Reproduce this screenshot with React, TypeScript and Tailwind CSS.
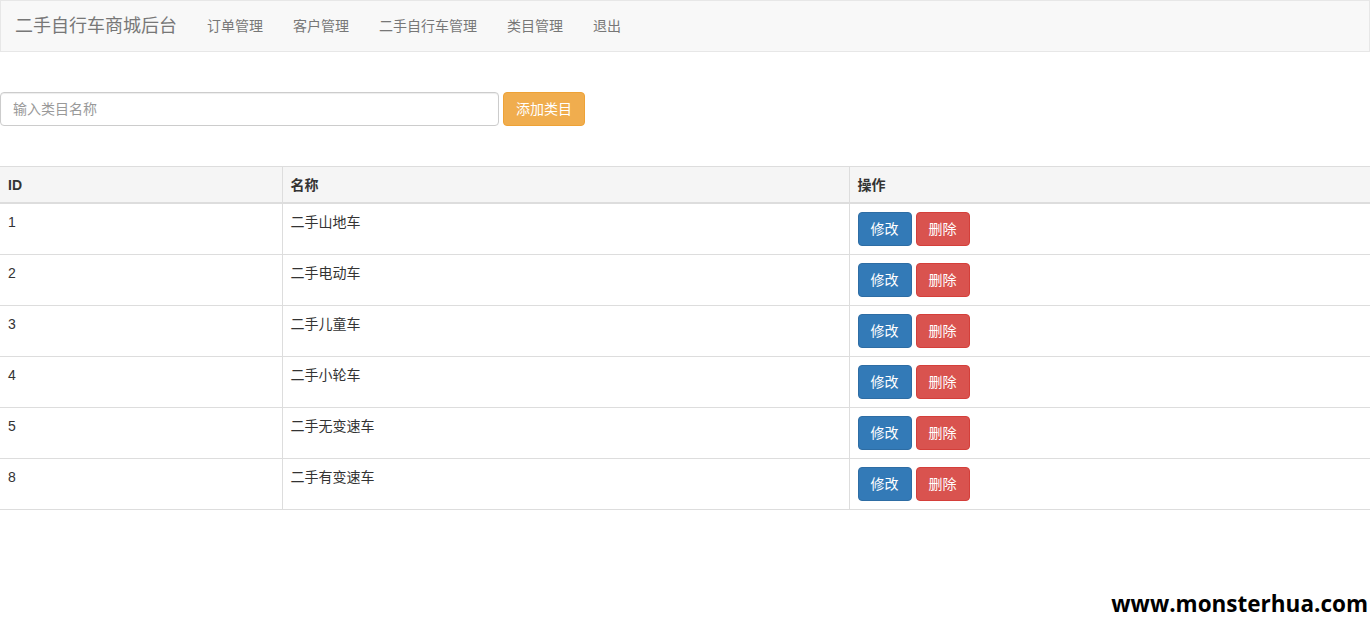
import React from 'react';

const navItems = ['订单管理', '客户管理', '二手自行车管理', '类目管理', '退出'];

const categories = [
  { id: 1, name: '二手山地车' },
  { id: 2, name: '二手电动车' },
  { id: 3, name: '二手儿童车' },
  { id: 4, name: '二手小轮车' },
  { id: 5, name: '二手无变速车' },
  { id: 8, name: '二手有变速车' },
];

export default function App() {
  return (
    <div
      className="relative min-h-[635px] bg-white text-[14px] leading-[20px] text-[#333]"
      style={{ fontFamily: '"Liberation Sans", "Noto Sans CJK SC", sans-serif' }}
    >
      {/* 导航栏 */}
      <nav className="flex h-[52px] items-stretch border border-[#e7e7e7] bg-[#f8f8f8]">
        <a className="flex items-center pl-[14px] pr-[15px] text-[18px] text-[#777]">二手自行车商城后台</a>
        <ul className="flex">
          {navItems.map(item => (
            <li key={item} className="flex items-center px-[15px] text-[#777]">
              {item}
            </li>
          ))}
        </ul>
      </nav>

      {/* 添加类目 */}
      <div className="mt-[40px] flex items-center gap-[4px]">
        <input
          placeholder="输入类目名称"
          className="h-[34px] w-[499px] rounded-[4px] border border-[#ccc] px-[12px] text-[14px] text-[#555] shadow-[inset_0_1px_1px_rgba(0,0,0,0.075)] placeholder:text-[#999] outline-none"
        />
        <button className="h-[34px] rounded-[4px] border border-[#eea236] bg-[#f0ad4e] px-[12px] text-white">
          添加类目
        </button>
      </div>

      {/* 类目表格 */}
      <table className="mt-[40px] w-full border-collapse">
        <thead>
          <tr className="bg-[#f5f5f5]">
            <th className="w-[282px] border-t border-b-2 border-[#ddd] px-[8px] pt-[8px] pb-[7px] text-left font-bold">ID</th>
            <th className="w-[567px] border-t border-b-2 border-l border-[#ddd] px-[8px] pt-[8px] pb-[7px] text-left font-bold">名称</th>
            <th className="border-t border-b-2 border-l border-[#ddd] px-[8px] pt-[8px] pb-[7px] text-left font-bold">操作</th>
          </tr>
        </thead>
        <tbody>
          {categories.map(c => (
            <tr key={c.id}>
              <td className="border-b border-[#ddd] px-[8px] py-[8px] align-top">{c.id}</td>
              <td className="border-b border-l border-[#ddd] px-[8px] py-[8px] align-top">{c.name}</td>
              <td className="border-b border-l border-[#ddd] px-[8px] py-[8px] align-top">
                <div className="flex gap-[4px]">
                  <button className="h-[34px] w-[54px] rounded-[4px] border border-[#2e6da4] bg-[#337ab7] text-white">修改</button>
                  <button className="h-[34px] w-[54px] rounded-[4px] border border-[#d43f3a] bg-[#d9534f] text-white">删除</button>
                </div>
              </td>
            </tr>
          ))}
        </tbody>
      </table>

      <div
        className="absolute right-[2px] top-[594px] text-[22.5px] font-bold text-black"
        style={{ fontFamily: '"Open Sans", sans-serif' }}
      >
        www.monsterhua.com
      </div>
    </div>
  );
}
